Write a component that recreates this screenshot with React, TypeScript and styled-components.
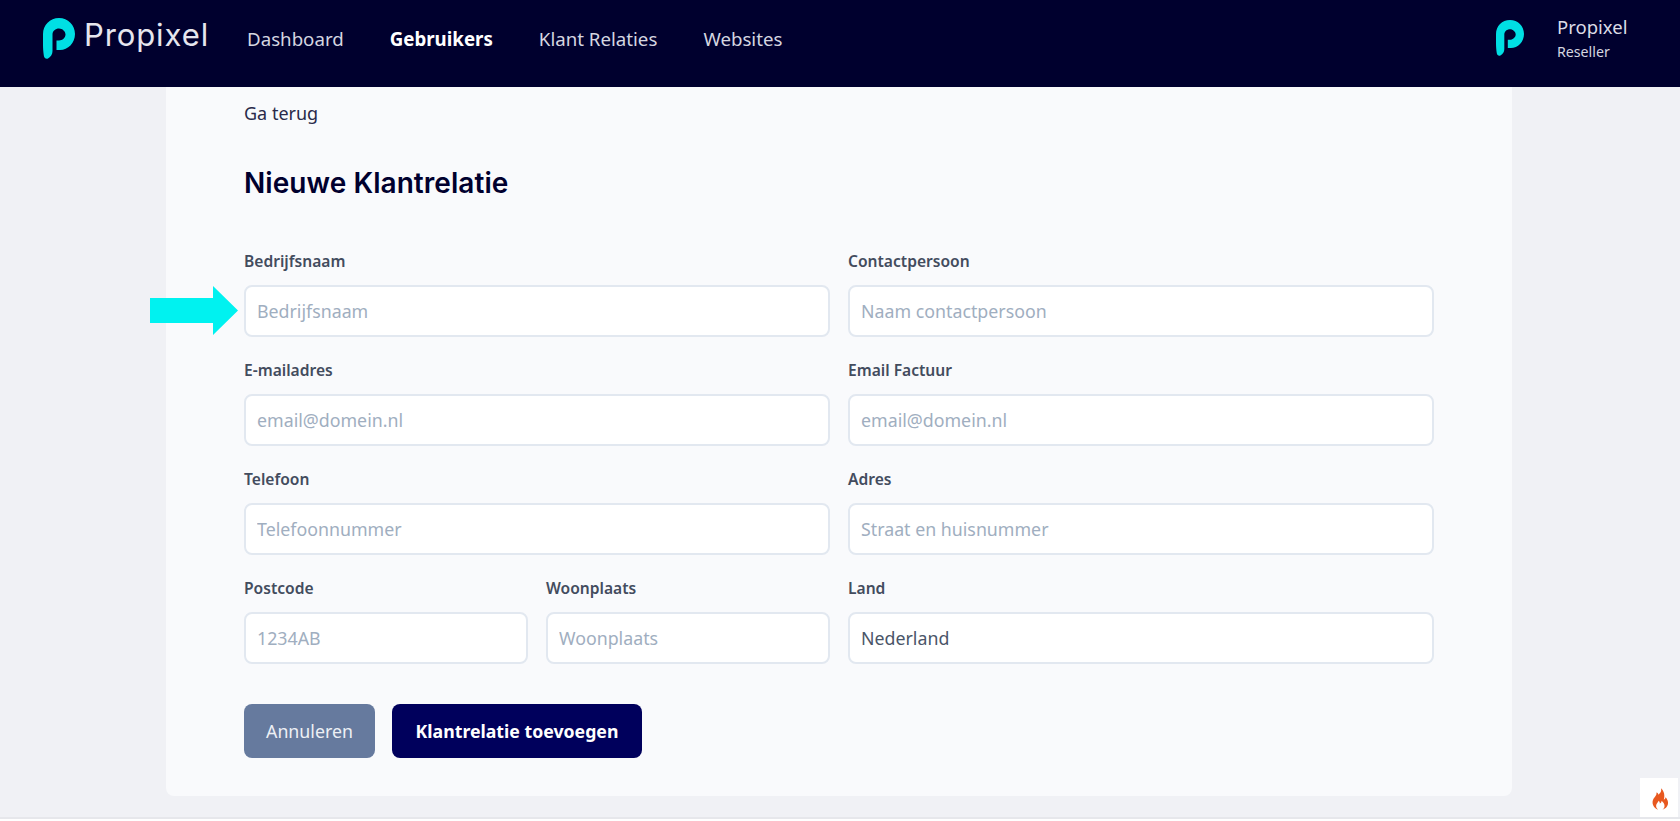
import styled, { createGlobalStyle } from "styled-components";

const GlobalStyle = createGlobalStyle`
  html, body {
    margin: 0;
    height: 100%;
    background: #ffffff;
    overflow: hidden;
  }
  * {
    box-sizing: border-box;
  }
`;

const LogoMark = ({ width }: { width: number }) => (
  <svg width={width} height={(width * 41) / 32} viewBox="0 0 32 41">
    <path
      d="M0 16C0 7 7 0 16 0s16 7 16 16c0 9-7 16-15 16h-3.500V22.500H16c3.500 0 6.500-3 6.500-6s-3-6-6.500-6-6.500 2.500-6.500 6V33c0 3-1.500 6-4.500 7.500-2 .8-3.800-.5-4.100-2.500C.3 34 0 30 0 27Z"
      fill="#00dfe4"
    />
  </svg>
);

const Flame = () => (
  <svg width="17" height="22" viewBox="0 0 19 24">
    <path
      d="M10 0c1 3.500-.8 5.200-2.600 7.200C7 5.800 6.300 5 5 4.600c.5 2.800-1.400 4.300-3 6.600C.4 13.600.2 16.500 1.300 19c1 2.200 3 4 5.500 5-1.800-1.500-2.600-3.500-2-5.500.5-1.700 2-2.700 2.700-4.500 1 1 1.300 2 1.200 3 1.300-.4 2-1.500 2-3 2 2 3.500 3.800 3.300 6-.1 1.600-1 3-2.300 4 3-.8 5.500-3 6.100-6 .7-3.200-.7-6-2.600-8-.2 1.300-.8 2.200-2 2.800C14.700 8 13.500 3 10 0Z"
      fill="#e8581f"
    />
  </svg>
);

const ArrowIcon = () => (
  <svg width="88" height="49" viewBox="0 0 88 49">
    <path d="M0 12h63V0l25 24.500L63 49V37H0Z" fill="#00f2f0" />
  </svg>
);

export default function App() {
  return (
    <Page>
      <GlobalStyle />
      <TopBar>
        <Brand>
          <LogoMark width={32} />
          <BrandName>Propixel</BrandName>
        </Brand>
        <Nav>
          <NavLink>Dashboard</NavLink>
          <NavLink $active>Gebruikers</NavLink>
          <NavLink>Klant Relaties</NavLink>
          <NavLink>Websites</NavLink>
        </Nav>
        <Account>
          <LogoMark width={28} />
          <AccountText>
            <AccountName>Propixel</AccountName>
            <AccountRole>Reseller</AccountRole>
          </AccountText>
        </Account>
      </TopBar>
      <Main>
        <Card>
          <BackLink>Ga terug</BackLink>
          <Title>Nieuwe Klantrelatie</Title>
          <Form>
            <Field>
              <Label>Bedrijfsnaam</Label>
              <PointerArrow>
                <ArrowIcon />
              </PointerArrow>
              <Input placeholder="Bedrijfsnaam" />
            </Field>
            <Field>
              <Label>Contactpersoon</Label>
              <Input placeholder="Naam contactpersoon" />
            </Field>
            <Field>
              <Label>E-mailadres</Label>
              <Input placeholder="email@domein.nl" />
            </Field>
            <Field>
              <Label>Email Factuur</Label>
              <Input placeholder="email@domein.nl" />
            </Field>
            <Field>
              <Label>Telefoon</Label>
              <Input placeholder="Telefoonnummer" />
            </Field>
            <Field>
              <Label>Adres</Label>
              <Input placeholder="Straat en huisnummer" />
            </Field>
            <SplitField>
              <Field>
                <Label>Postcode</Label>
                <Input placeholder="1234AB" />
              </Field>
              <Field>
                <Label>Woonplaats</Label>
                <Input placeholder="Woonplaats" />
              </Field>
            </SplitField>
            <Field>
              <Label>Land</Label>
              <Input defaultValue="Nederland" />
            </Field>
          </Form>
          <Actions>
            <CancelButton>Annuleren</CancelButton>
            <SubmitButton>Klantrelatie toevoegen</SubmitButton>
          </Actions>
        </Card>
      </Main>
      <DebugBadge>
        <Flame />
      </DebugBadge>
    </Page>
  );
}

const Page = styled.div`
  height: 821px;
  display: flex;
  flex-direction: column;
  font-family: "Noto Sans", "Open Sans", sans-serif;
  position: relative;
`;

const TopBar = styled.header`
  height: 87px;
  flex: none;
  background: #00002e;
  display: flex;
  align-items: center;
  padding: 0 0 11px 43px;
`;

const Brand = styled.div`
  display: flex;
  align-items: center;
  gap: 9px;
  width: 204px;
`;

const BrandName = styled.span`
  font-family: "Inter", sans-serif;
  font-size: 31px;
  font-weight: 400;
  letter-spacing: 0.9px;
  color: #e6e6ee;
  line-height: 1;
  margin-top: -7px;
`;

const Nav = styled.nav`
  display: flex;
  gap: 46px;
`;

const NavLink = styled.a<{ $active?: boolean }>`
  font-size: 18.7px;
  font-weight: ${({ $active }) => ($active ? 700 : 400)};
  color: ${({ $active }) => ($active ? "#ffffff" : "#d5d6e0")};
`;

const Account = styled.div`
  margin-left: auto;
  width: 184px;
  display: flex;
  align-items: center;
  gap: 33px;
`;

const AccountText = styled.div`
  display: flex;
  flex-direction: column;
  gap: 2px;
`;

const AccountName = styled.span`
  font-size: 18.5px;
  line-height: 25px;
  color: #dcdce6;
`;

const AccountRole = styled.span`
  font-size: 14.2px;
  line-height: 22px;
  color: #d5d6e0;
`;

const Main = styled.main`
  height: 732px;
  flex: none;
  background: #f0f1f5;
  border-bottom: 2px solid #e6e7eb;
  padding: 0 168px 21px 166px;
`;

const Card = styled.section`
  height: 100%;
  background: #f9fafc;
  border-radius: 0 0 8px 8px;
  padding: 14px 78px 0;
`;

const BackLink = styled.a`
  display: block;
  font-size: 18px;
  line-height: 25px;
  color: #2a2a4a;
`;

const Title = styled.h1`
  margin: 39px 0 0;
  font-family: "Inter", sans-serif;
  font-size: 28px;
  line-height: 36px;
  font-weight: 600;
  letter-spacing: 0.06px;
  color: #00002e;
`;

const Form = styled.div`
  width: 1190px;
  margin-top: 50px;
  display: grid;
  grid-template-columns: 586px 586px;
  column-gap: 18px;
  row-gap: 23px;
`;

const Field = styled.div`
  position: relative;
  display: flex;
  flex-direction: column;
  gap: 14px;
`;

const SplitField = styled.div`
  display: grid;
  grid-template-columns: 284px 284px;
  column-gap: 18px;
`;

const Label = styled.label`
  font-size: 15.6px;
  line-height: 20px;
  font-weight: 600;
  color: #434c5e;
`;

const Input = styled.input`
  width: 100%;
  height: 52px;
  padding: 0 11px;
  background: #ffffff;
  border: 2px solid #e2e8f0;
  border-radius: 8px;
  font-family: inherit;
  font-size: 17.8px;
  color: #4a5568;
  outline: none;

  &::placeholder {
    color: #a0aec0;
    opacity: 1;
  }
`;

const PointerArrow = styled.span`
  position: absolute;
  left: -94px;
  top: 35px;
  display: flex;
`;

const Actions = styled.div`
  display: flex;
  gap: 17px;
  margin-top: 40px;
`;

const CancelButton = styled.button`
  width: 131px;
  height: 54px;
  border: none;
  border-radius: 8px;
  background: #667a9e;
  color: #edf0f5;
  font-family: inherit;
  font-size: 17.8px;
`;

const SubmitButton = styled.button`
  width: 250px;
  height: 54px;
  border: none;
  border-radius: 8px;
  background: #00005c;
  color: #ffffff;
  font-family: inherit;
  font-size: 17.7px;
  font-weight: 700;
`;

const DebugBadge = styled.div`
  position: absolute;
  right: 2px;
  bottom: 4px;
  width: 38px;
  height: 39px;
  padding: 3px 0 0 3px;
  background: #ffffff;
  display: flex;
  align-items: center;
  justify-content: center;
`;
